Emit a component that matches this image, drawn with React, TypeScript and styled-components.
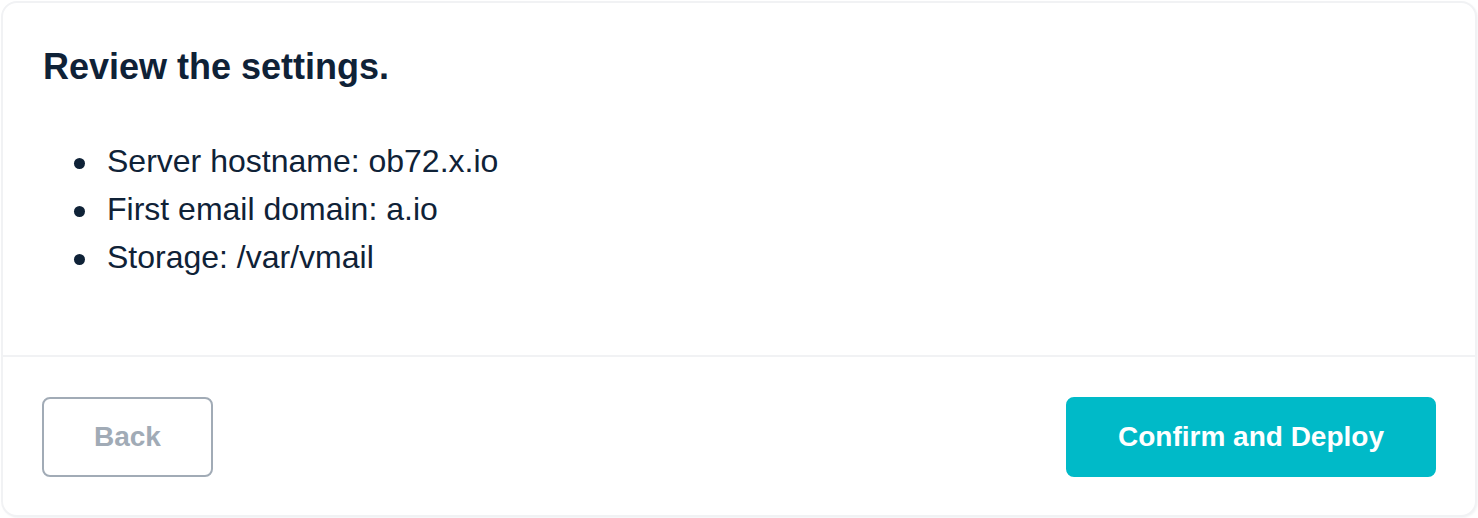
import React from "react";
import styled, { createGlobalStyle } from "styled-components";

const GlobalStyle = createGlobalStyle`
  html, body { margin: 0; padding: 0; background: #ffffff; }
  body { font-family: "Liberation Sans", Arial, Helvetica, sans-serif; }
  * { box-sizing: border-box; }
`;

const Page = styled.div`
  padding: 1px;
  width: 1478px;
  height: 518px;
`;

const Card = styled.section`
  display: flex;
  flex-direction: column;
  height: 516px;
  border: 2px solid #f1f2f4;
  border-radius: 16px;
  background: #ffffff;
  box-shadow: 1px 1px 2px rgba(15, 33, 55, 0.05);
  overflow: hidden;
`;

const Body = styled.div`
  flex: 1;
  padding: 40px 40px 0 40px;
  border-bottom: 2px solid #f1f2f4;
`;

const Title = styled.h2`
  margin: 0;
  font-size: 36px;
  line-height: 48px;
  font-weight: 700;
  color: #0f2237;
`;

const List = styled.ul`
  margin: 46px 0 0 0;
  padding-left: 64px;
  list-style: none;
  font-size: 32px;
  line-height: 48px;
  color: #0f2237;
`;

const Item = styled.li`
  &::before {
    content: "";
    display: inline-block;
    width: 11px;
    height: 11px;
    border-radius: 50%;
    background: #0f2237;
    vertical-align: middle;
    margin-left: -33px;
    margin-right: 22px;
  }
`;

const Footer = styled.div`
  display: flex;
  justify-content: space-between;
  align-items: center;
  padding: 40px 39px 38px 39px;
`;

const Button = styled.button<{ $primary?: boolean }>`
  height: 80px;
  padding: 0 50px;
  border-radius: 8px;
  font-family: "Liberation Sans", Arial, Helvetica, sans-serif;
  font-size: 28px;
  font-weight: 700;
  cursor: pointer;
  border: 2px solid ${(p) => (p.$primary ? "#00bac8" : "#a1abb6")};
  background: ${(p) => (p.$primary ? "#00bac8" : "#ffffff")};
  color: ${(p) => (p.$primary ? "#ffffff" : "#a1abb6")};
`;

export default function App() {
  return (
    <>
      <GlobalStyle />
      <Page>
        <Card>
          <Body>
            <Title>Review the settings.</Title>
            <List>
              <Item>Server hostname: ob72.x.io</Item>
              <Item>First email domain: a.io</Item>
              <Item>Storage: /var/vmail</Item>
            </List>
          </Body>
          <Footer>
            <Button>Back</Button>
            <Button $primary>Confirm and Deploy</Button>
          </Footer>
        </Card>
      </Page>
    </>
  );
}
